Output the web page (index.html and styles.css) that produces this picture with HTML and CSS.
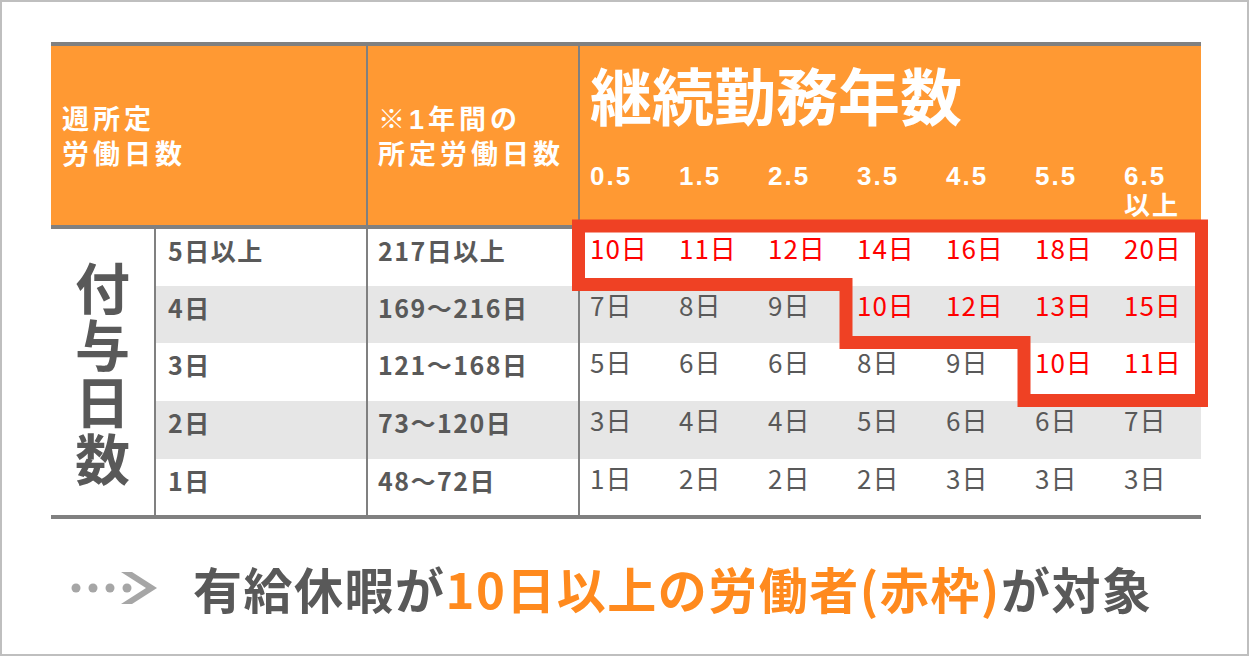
FILE: index.html
```html
<!DOCTYPE html>
<html lang="ja">
<head>
<meta charset="utf-8">
<link rel="stylesheet" href="styles.css">
</head>
<body>
<div class="frame">
  <div class="tbl">
    <div class="head">
      <div class="hcell h1">週所定<br>労働日数</div>
      <div class="hcell h2">※1年間の<br>所定労働日数</div>
      <div class="hcell h3">
        <div class="title">継続勤務年数</div>
        <div class="years">
          <span>0.5</span><span>1.5</span><span>2.5</span><span>3.5</span><span>4.5</span><span>5.5</span><span>6.5<br>以上</span>
        </div>
      </div>
    </div>
    <div class="body">
      <div class="side"><span class="vt">付与日数</span></div>

      <div class="c lab">5日以上</div><div class="c lab2">217日以上</div>
      <div class="c d first red">10日</div><div class="c d red">11日</div><div class="c d red">12日</div><div class="c d red">14日</div><div class="c d red">16日</div><div class="c d red">18日</div><div class="c d red">20日</div>

      <div class="c lab g">4日</div><div class="c lab2 g">169～216日</div>
      <div class="c d first g">7日</div><div class="c d g">8日</div><div class="c d g">9日</div><div class="c d g red">10日</div><div class="c d g red">12日</div><div class="c d g red">13日</div><div class="c d g red">15日</div>

      <div class="c lab">3日</div><div class="c lab2">121～168日</div>
      <div class="c d first">5日</div><div class="c d">6日</div><div class="c d">6日</div><div class="c d">8日</div><div class="c d">9日</div><div class="c d red">10日</div><div class="c d red">11日</div>

      <div class="c lab g">2日</div><div class="c lab2 g">73～120日</div>
      <div class="c d first g">3日</div><div class="c d g">4日</div><div class="c d g">4日</div><div class="c d g">5日</div><div class="c d g">6日</div><div class="c d g">6日</div><div class="c d g">7日</div>

      <div class="c lab">1日</div><div class="c lab2">48～72日</div>
      <div class="c d first">1日</div><div class="c d">2日</div><div class="c d">2日</div><div class="c d">2日</div><div class="c d">3日</div><div class="c d">3日</div><div class="c d">3日</div>
    </div>
  </div>

  <svg class="redframe" width="644" height="195" viewBox="568 215 644 195">
    <polygon points="578.5,226 1201.5,226 1201.5,400.5 1024,400.5 1024,342.5 846,342.5 846,284.5 578.5,284.5" fill="none" stroke="#ef4124" stroke-width="13" stroke-linejoin="miter"/>
  </svg>

  <div class="note">
    <svg class="arrow" width="95" height="42" viewBox="0 0 95 42">
      <circle cx="8" cy="21" r="4.5" fill="#a6a6a6"/>
      <circle cx="25" cy="21" r="4.5" fill="#a6a6a6"/>
      <circle cx="42" cy="21" r="4.5" fill="#a6a6a6"/>
      <circle cx="59" cy="21" r="4.5" fill="#a6a6a6"/>
      <polygon points="53,5 64,5 89,21 64,37 53,37 78,21" fill="#a6a6a6"/>
    </svg>
    <p class="msg">有給休暇が<span class="hl">10日以上の労働者(赤枠)</span>が対象</p>
  </div>
</div>
</body>
</html>
```

FILE: styles.css
```css
* {
  box-sizing: border-box;
}

body {
  margin: 0;
  font-family: "Noto Sans CJK JP", "Noto Sans", sans-serif;
}

.frame {
  position: relative;
  width: 1249px;
  height: 656px;
  border: 2px solid #bfbfbf;
  padding: 40px 0 0 49px;
  background: #fff;
  color: #595959;
  overflow: hidden;
}

.tbl {
  width: 1150px;
  border-top: 4px solid #808080;
  border-bottom: 4px solid #808080;
}

.head {
  display: grid;
  grid-template-columns: 315px 212px 623px;
  height: 183px;
  background: #ff9933;
  border-bottom: 4px solid #808080;
}

.hcell {
  color: #fff;
  font-weight: 700;
}

.h1,
.h2 {
  display: flex;
  align-items: center;
  font-family: "Liberation Sans", "Noto Sans CJK JP", sans-serif;
  font-size: 27px;
  line-height: 35px;
  letter-spacing: 4px;
  padding: 5px 0 0 11px;
}

.h2 {
  border-left: 2px solid #808080;
  padding-left: 10px;
}

.h3 {
  border-left: 2px solid #808080;
  padding: 10px 0 0 10px;
}

.title {
  font-size: 62px;
  line-height: 76px;
}

.years {
  display: grid;
  grid-template-columns: repeat(7, 89px);
  margin-top: 29px;
  font-family: "Liberation Sans", "Noto Sans CJK JP", sans-serif;
  font-size: 26px;
  line-height: 30px;
  letter-spacing: 2px;
}

.body {
  display: grid;
  grid-template-columns: 103px 212px 212px repeat(7, 89px);
  grid-template-rows: 57px 57px 58px 58px 56px;
}

.side {
  grid-row: 1 / span 5;
  grid-column: 1;
  display: flex;
  align-items: center;
  justify-content: center;
  padding-top: 6px;
}

.vt {
  writing-mode: vertical-rl;
  text-orientation: upright;
  font-size: 55px;
  line-height: 60px;
  letter-spacing: 2px;
  font-weight: 700;
}

.c {
  font-size: 26px;
  line-height: 30px;
}

.lab,
.lab2 {
  border-left: 2px solid #808080;
  font-size: 25px;
  font-weight: 700;
  letter-spacing: 1.5px;
  padding: 6px 0 0 12px;
}

.lab2 {
  padding-left: 10px;
}

.d {
  padding: 4px 0 0 12px;
  letter-spacing: 1px;
}

.d.first {
  border-left: 2px solid #808080;
  padding-left: 10px;
}

.g {
  background: #e6e6e6;
}

.red {
  color: #ff0000;
}

.redframe {
  position: absolute;
  left: 566px;
  top: 213px;
}

.note {
  display: flex;
  align-items: center;
  height: 70px;
  margin-top: 34px;
  padding-left: 17px;
}

.arrow {
  flex: none;
}

.msg {
  margin: 0 0 0 30px;
  font-size: 49px;
  line-height: 60px;
  font-weight: 700;
  letter-spacing: 1.5px;
  white-space: nowrap;
}

.hl {
  color: #ff8a1e;
}
```
